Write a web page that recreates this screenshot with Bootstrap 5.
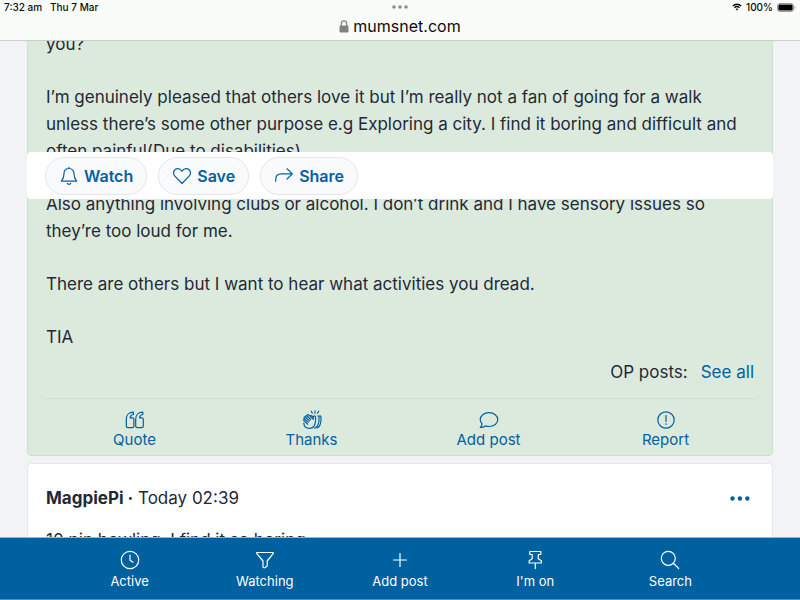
<!DOCTYPE html>
<html lang="en">
<head>
<meta charset="utf-8">
<meta name="viewport" content="width=device-width, initial-scale=1">
<title>mumsnet.com</title>
<link href="https://cdn.jsdelivr.net/npm/bootstrap@5.3.0/dist/css/bootstrap.min.css" rel="stylesheet">
<style>
body { font-family: Inter, "Liberation Sans", sans-serif; font-size: 17px; line-height: 27px; color: #1f2937; background: #f2f3f5; }
svg { display: block; flex: none; fill: none; stroke: currentColor; stroke-width: 1.2; stroke-linecap: round; stroke-linejoin: round; }
a, .blue { color: #0061a0; text-decoration: none; }
.browser-bar { background: #fafcfa; border-bottom: 1px solid #cbcecc; color: #0b0b0b; height: 41px; }
.status { font-size: 10px; line-height: 14px; font-weight: 500; padding: 0 4px; }
.status > div { flex: 1 1 0; }
.address { font-size: 16px; line-height: 25px; }
.thread { padding: 0 27px; }
.post { border: 1px solid #e3e6ea; border-radius: 4px; padding: 0 18px; background: #fff; }
.op { background: #dceadd; border-color: #cfddd2; padding-top: 30px; margin-bottom: 7px; }
.op p, .reply p { margin-bottom: 26px; }
.op .op-links { margin-top: -4px; gap: 13px; }
.actions { border-top: 1px solid #cfddd2; margin-top: 12px; padding: 11px 0 5px; font-size: 15px; line-height: 20px; }
.float-bar { top: 152px; left: 27px; right: 27px; height: 47px; padding: 0 18px; gap: 11px; background: #fff; border-radius: 4px; z-index: 5; }
.pill { height: 38px; border: 1px solid #e3e6ea; border-radius: 19px; background: #f9fafc; color: #0061a0; font-size: 16px; font-weight: 600; line-height: 20px; padding: 0 13px 0 14px; gap: 6px; }
.reply { padding-top: 21px; }
.reply header { margin-bottom: 15px; }
.tabs-bar { background: #0061a0; border-top: 1px solid #8fb8d5; border-bottom: 1px solid #4b90c0; padding: 12px 62px 8px; font-size: 13px; line-height: 20px; }
.tabs-bar a { color: #fff; gap: 1px; }
</style>
<script src="https://cdn.jsdelivr.net/npm/bootstrap@5.3.0/dist/js/bootstrap.bundle.min.js"></script>
</head>
<body class="vh-100 overflow-hidden">
<header class="browser-bar fixed-top">
  <div class="status d-flex align-items-center">
    <div class="d-flex gap-2"><span>7:32 am</span><span>Thu 7 Mar</span></div>
    <svg width="16" height="4" viewBox="0 0 16 4" aria-hidden="true"><g fill="#8b8d8c" stroke="none"><circle cx="2" cy="2" r="1.8"/><circle cx="8" cy="2" r="1.8"/><circle cx="14" cy="2" r="1.8"/></g></svg>
    <div class="d-flex justify-content-end align-items-center gap-1">
      <svg width="10" height="8" viewBox="0 0 10 8" aria-hidden="true"><path d="M.8 2.900a6 6 0 0 1 8.400 0M2.500 4.800a3.600 3.600 0 0 1 5 0" stroke-width="1.400" stroke-linecap="butt"/><path d="M3.600 6.100a2 2 0 0 1 2.800 0L5 7.600z" fill="currentColor" stroke="none"/></svg>
      <span>100%</span>
      <svg width="19" height="9" viewBox="0 0 19 9" aria-hidden="true"><rect x=".5" y=".5" width="16" height="8" rx="2.4" stroke="#9a9c9b" stroke-width="1"/><rect x="1.4" y="1.4" width="14.2" height="6.2" rx="1.4" fill="#000" stroke="none"/><path d="M17.6 3v3q1-.5 1-1.500t-1-1.500z" fill="#9a9c9b" stroke="none"/></svg>
    </div>
  </div>
  <div class="address d-flex justify-content-center align-items-center gap-1">
    <svg width="10" height="13" viewBox="0 0 10 13" aria-hidden="true"><path d="M2.3 6V3.600a2.700 2.700 0 0 1 5.400 0V6" stroke="#808281"/><rect x=".5" y="5.5" width="9" height="7" rx="1.3" fill="#808281" stroke="none"/></svg>
    <span>mumsnet.com</span>
  </div>
</header>

<main class="thread">
  <article class="post op">
    <p>you?</p>
    <p>I’m genuinely pleased that others love it but I’m really not a fan of going for a walk unless there’s some other purpose e.g Exploring a city. I find it boring and difficult and often painful(Due to disabilities)</p>
    <p>Also anything involving clubs or alcohol. I don’t drink and I have sensory issues so they’re too loud for me.</p>
    <p>There are others but I want to hear what activities you dread.</p>
    <p class="mb-2">TIA</p>
    <div class="op-links d-flex justify-content-end pt-1"><span>OP posts:</span><a href="#">See all</a></div>
    <div class="actions row g-0 text-center">
      <a href="#" class="col d-flex flex-column align-items-center"><svg width="20" height="20" viewBox="0 0 20 20" aria-hidden="true"><path id="q" d="M8.400 2.200v2.300C6.400 4.700 5.300 5.900 5.200 7.900H7.200a1.700 1.700 0 0 1 1.700 1.700v6.400a1.700 1.700 0 0 1-1.700 1.700H3a1.700 1.700 0 0 1-1.700-1.700V9C1.300 5 4 2.200 8.400 2.200z"/><use href="#q" x="9.400"/></svg>Quote</a>
      <a href="#" class="col d-flex flex-column align-items-center"><svg width="20" height="20" viewBox="0 0 20 20" aria-hidden="true"><path d="M5.700 14.200L2 10.800c-.9-.9.200-2.100 1.200-1.300l3 2.700M3.300 9.500L2.300 8.500c-.9-1 .3-2.200 1.300-1.300l3.800 3.700M3.700 7.200c-.7-1 .5-2 1.400-1.200l3.500 3.500M5.200 6c-.3-1.200.9-1.800 1.700-1l4.400 4.200c.2-1.300-.2-3.200 1-3.300 1.400-.1 1.500 1.500 1.300 4.100-.2 5-2.300 8.400-6.100 8.400-3.300 0-5.500-2-5.700-5.400M8.400 6.300c.2-1 1.200-.9 1.700-.3l1.300 1.200M16 5.900c1.300 0 1.100 1.800 1 4.100-.2 4.400-1.700 7.300-4.600 8.200M17.500 6c1.500-.4 1.600 1 1.500 3.700-.2 4.300-1.300 7.300-3.900 8.300M9.300 1.200l1 2M13 .8v2.400M16.700 1.200l-1.200 2"/></svg>Thanks</a>
      <a href="#" class="col d-flex flex-column align-items-center"><svg width="20" height="20" viewBox="0 0 20 20" aria-hidden="true"><path d="M10 2.700c5 0 8.800 3 8.800 6.900s-3.800 6.900-8.800 6.900c-1.300 0-2.500-.2-3.600-.6-1.300 1-3 1.700-5.100 1.600 1-1.100 1.600-2.300 1.800-3.700C1.900 12.600 1.200 11.200 1.200 9.600c0-3.900 3.800-6.900 8.800-6.900z"/></svg>Add post</a>
      <a href="#" class="col d-flex flex-column align-items-center"><svg width="20" height="20" viewBox="0 0 20 20" aria-hidden="true"><circle cx="10" cy="10" r="8.200"/><path d="M10 5.500v6"/><circle cx="10" cy="14.100" r=".8" fill="currentColor" stroke="none"/></svg>Report</a>
    </div>
  </article>

  <article class="post reply">
    <header class="d-flex justify-content-between align-items-center"><div><strong>MagpiePi ·</strong> Today 02:39</div>
      <button class="btn p-0 border-0 blue me-1" type="button" aria-label="Post options"><svg width="20" height="5" viewBox="0 0 20 5" aria-hidden="true"><g fill="currentColor" stroke="none"><circle cx="2.500" cy="2.500" r="2.200"/><circle cx="9.900" cy="2.500" r="2.200"/><circle cx="17.300" cy="2.500" r="2.200"/></g></svg></button></header>
    <p>10 pin bowling. I find it so boring.</p>
  </article>
</main>

<div class="float-bar position-absolute d-flex align-items-center">
  <button type="button" class="pill d-flex align-items-center"><svg width="18" height="20" viewBox="0 0 18 20" aria-hidden="true"><path d="M9 1.300v1.200M9 2.500c-3.300 0-5 2.400-5 5.300 0 4.200-1.300 5.500-2.700 7.400h15.400C15.300 13.300 14 12 14 7.800c0-2.900-1.700-5.300-5-5.300zM7.300 17.300c.5 1.400 2.900 1.400 3.400 0"/></svg>Watch</button>
  <button type="button" class="pill d-flex align-items-center"><svg width="18" height="18" viewBox="0 0 18 18" aria-hidden="true"><path d="M9 16.500L1.900 9.200C-.9 6 1 1.700 4.800 1.700 6.700 1.700 8 2.700 9 4.300c1-1.600 2.300-2.600 4.200-2.600C17 1.700 18.900 6 16.100 9.200z"/></svg>Save</button>
  <button type="button" class="pill d-flex align-items-center"><svg width="18" height="18" viewBox="0 0 18 18" aria-hidden="true"><path d="M.7 14.300V12.500c0-3.600 2-5.600 5.600-5.600h11M12 1.800l5.300 5.100-5.300 5.100"/></svg>Share</button>
</div>

<nav class="tabs-bar fixed-bottom">
  <div class="row g-0 text-center">
    <a href="#" class="col d-flex flex-column align-items-center"><svg width="20" height="20" viewBox="0 0 20 20" aria-hidden="true"><circle cx="10" cy="10" r="8.700"/><path d="M10 5v5.200l3 2"/></svg>Active</a>
    <a href="#" class="col d-flex flex-column align-items-center"><svg width="20" height="20" viewBox="0 0 20 20" aria-hidden="true"><path d="M2 2.500h16c.5 0 .6.500.3.900L12.200 11v5l-2 1.500c-.7.500-2.200.4-2.200-.8V11L1.700 3.400c-.3-.4-.2-.9.300-.9z"/></svg>Watching</a>
    <a href="#" class="col d-flex flex-column align-items-center"><svg width="20" height="20" viewBox="0 0 20 20" aria-hidden="true"><path d="M3.500 10h13M10 3.500v13"/></svg>Add post</a>
    <a href="#" class="col d-flex flex-column align-items-center"><svg width="20" height="20" viewBox="0 0 20 20" aria-hidden="true"><path d="M4.800 1.500h11v3h-2.500v4.200l3 2v2.300H4.200v-2.300l3-2V4.500H4.800zM10.300 13v5.500"/></svg>I'm on</a>
    <a href="#" class="col d-flex flex-column align-items-center"><svg width="20" height="20" viewBox="0 0 20 20" aria-hidden="true"><circle cx="8.300" cy="8.300" r="7"/><path d="M13.300 13.300l5.400 5.200"/></svg>Search</a>
  </div>
</nav>
</body>
</html>
